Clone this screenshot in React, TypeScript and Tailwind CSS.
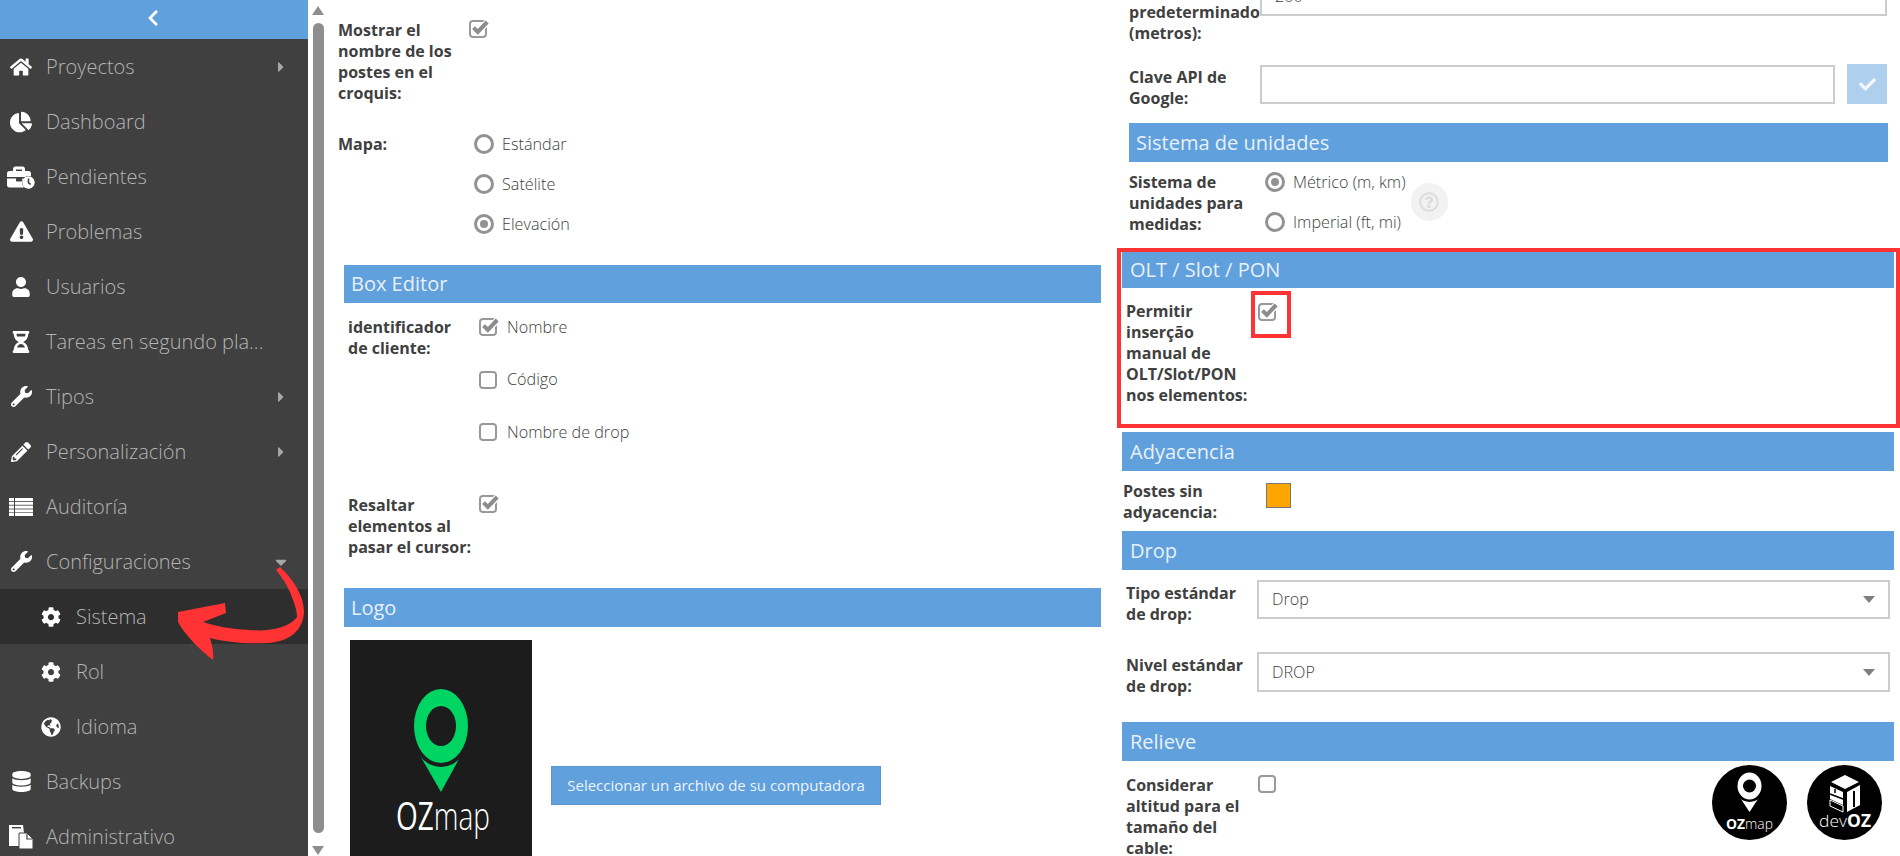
import type { ReactNode } from "react";
import {
  FaChevronLeft,
  FaHome,
  FaChartPie,
  FaBriefcase,
  FaClock,
  FaExclamationTriangle,
  FaUser,
  FaHourglassHalf,
  FaWrench,
  FaPencilAlt,
  FaCog,
  FaGlobeAmericas,
  FaDatabase,
  FaCaretRight,
  FaCaretDown,
  FaCheck,
  FaRegQuestionCircle,
} from "react-icons/fa";

const menuText = "text-[20px] font-light text-[#b4b4b4] whitespace-nowrap";
const optionText = "text-[16.2px] font-light text-[#404040] whitespace-nowrap";

function MenuItem({
  icon,
  label,
  caret,
  sub,
  active,
}: {
  icon: ReactNode;
  label: string;
  caret?: "right" | "down";
  sub?: boolean;
  active?: boolean;
}) {
  return (
    <div className={`h-[55px] flex items-center relative ${active ? "bg-[#2e2e2e]" : ""}`}>
      <div className={`flex justify-center text-white ${sub ? "w-[42px] ml-[30px]" : "w-[42px]"}`}>{icon}</div>
      <span className={`${menuText} ml-[4px]`}>{label}</span>
      {caret === "right" && <FaCaretRight className="absolute left-[273px] top-[20px] text-[#a6a6a6]" size={16} />}
      {caret === "down" && <FaCaretDown className="absolute left-[272px] top-[19px] text-[#a6a6a6]" size={18} />}
    </div>
  );
}

function ListIcon() {
  return (
    <svg width="24" height="18" viewBox="0 0 24 18" fill="#fff" className="block">
      <rect x="0" y="0" width="5" height="3" />
      <rect x="6" y="0" width="18" height="3" />
      <rect x="0" y="3.8" width="5" height="3" />
      <rect x="6" y="3.8" width="18" height="3" />
      <rect x="0" y="7.6" width="5" height="3" />
      <rect x="6" y="7.6" width="18" height="3" />
      <rect x="0" y="11.4" width="5" height="3" />
      <rect x="6" y="11.4" width="18" height="3" />
      <rect x="0" y="15" width="5" height="3" />
      <rect x="6" y="15" width="18" height="3" />
    </svg>
  );
}

function FilesIcon() {
  return (
    <svg width="24" height="24" viewBox="0 0 24 24" className="block">
      <path d="M0 0 H14 L15 8 H10 V21 H0 Z" fill="#fff" />
      <rect x="3" y="2" width="9" height="1.4" fill="#404040" />
      <path d="M10 8 H18 L24 14 V24 H10 Z" fill="#fff" stroke="#404040" strokeWidth="1" />
      <path d="M18 9 V14 H23" fill="none" stroke="#404040" strokeWidth="1.2" />
    </svg>
  );
}

function Sidebar() {
  return (
    <div className="w-[308px] shrink-0 h-full bg-[#404040] overflow-hidden">
      <div className="h-[39px] bg-[#5fa0dd] flex items-center justify-center text-white pb-[3px] pr-[2px]">
        <FaChevronLeft size={18} />
      </div>
      <MenuItem icon={<FaHome size={22} />} label="Proyectos" caret="right" />
      <MenuItem icon={<FaChartPie size={22} />} label="Dashboard" />
      <MenuItem
        icon={
          <span className="relative block w-[28px] h-[24px]">
            <FaBriefcase size={24} />
            <FaClock size={13} className="absolute right-0 bottom-0 bg-[#404040] rounded-full" />
          </span>
        }
        label="Pendientes"
      />
      <MenuItem icon={<FaExclamationTriangle size={23} />} label="Problemas" />
      <MenuItem icon={<FaUser size={20} />} label="Usuarios" />
      <MenuItem icon={<FaHourglassHalf size={22} />} label="Tareas en segundo pla..." />
      <MenuItem icon={<FaWrench size={21} />} label="Tipos" caret="right" />
      <MenuItem icon={<FaPencilAlt size={20} />} label="Personalización" caret="right" />
      <MenuItem icon={<ListIcon />} label="Auditoría" />
      <MenuItem icon={<FaWrench size={21} />} label="Configuraciones" caret="down" />
      <MenuItem icon={<FaCog size={20} />} label="Sistema" sub active />
      <MenuItem icon={<FaCog size={20} />} label="Rol" sub />
      <MenuItem icon={<FaGlobeAmericas size={20} />} label="Idioma" sub />
      <MenuItem icon={<FaDatabase size={21} />} label="Backups" />
      <MenuItem icon={<FilesIcon />} label="Administrativo" />
    </div>
  );
}

function Scrollbar() {
  return (
    <div className="w-[17px] shrink-0 h-full flex flex-col items-center pl-[3px]">
      <div className="mt-[6px] w-0 h-0 border-x-[6px] border-x-transparent border-b-[9px] border-b-[#8e8e8e]" />
      <div className="mt-[8px] w-[11px] h-[810px] rounded-[6px] bg-[#8e8e8e]" />
      <div className="mt-[13px] w-0 h-0 border-x-[6px] border-x-transparent border-t-[9px] border-t-[#8e8e8e]" />
    </div>
  );
}

function SectionHeader({ title, className }: { title: string; className: string }) {
  return (
    <div className={`bg-[#5fa0dd] flex items-center text-[20px] text-[#e9f0f7] ${className}`}>{title}</div>
  );
}

function Label({ children, className }: { children: ReactNode; className: string }) {
  return (
    <div className={`text-[16px] leading-[21px] font-bold text-[#404040] shrink-0 whitespace-nowrap ${className}`}>
      {children}
    </div>
  );
}

function Check({ checked }: { checked?: boolean }) {
  return (
    <svg width="20" height="18" viewBox="0 0 20 18" className="shrink-0 block">
      <rect x="1" y="1" width="16" height="16" rx="3" fill="#fff" stroke="#999" strokeWidth="2" />
      {checked && (
        <>
          <path d="M4.5 7.6 L8.8 11.8 L18.4 2" fill="none" stroke="#fff" strokeWidth="6.5" />
          <path d="M4.5 7.6 L8.8 11.8 L18.2 2" fill="none" stroke="#8c8c8c" strokeWidth="4" />
        </>
      )}
    </svg>
  );
}

function Radio({ checked, label }: { checked?: boolean; label: string }) {
  return (
    <div className="h-[20px] flex items-center">
      <span className="w-[20px] h-[20px] rounded-full border-[3px] border-[#929292] flex items-center justify-center shrink-0">
        {checked && <span className="w-[8px] h-[8px] rounded-full bg-[#929292]" />}
      </span>
      <span className={`ml-[8px] ${optionText}`}>{label}</span>
    </div>
  );
}

function SelectBox({ value, className }: { value: string; className: string }) {
  return (
    <div className={`border-2 border-[#cccccc] flex items-center justify-between pl-[13px] pr-[13px] ${optionText} ${className}`}>
      <span>{value}</span>
      <span className="w-0 h-0 border-x-[6px] border-x-transparent border-t-[7px] border-t-[#808080]" />
    </div>
  );
}

function CheckOption({ checked, label }: { checked?: boolean; label: string }) {
  return (
    <div className="flex items-center h-[18px]">
      <Check checked={checked} />
      <span className={`ml-[8px] ${optionText}`}>{label}</span>
    </div>
  );
}

function LeftColumn() {
  return (
    <div className="w-[785px] shrink-0">
      <div className="flex pl-[13px] pt-[20px]">
        <Label className="w-[131px]">
          Mostrar el
          <br />
          nombre de los
          <br />
          postes en el
          <br />
          croquis:
        </Label>
        <Check checked />
      </div>
      <div className="flex pl-[13px] mt-[30px]">
        <Label className="w-[136px]">Mapa:</Label>
        <div className="flex flex-col gap-[20px]">
          <Radio label="Estándar" />
          <Radio label="Satélite" />
          <Radio checked label="Elevación" />
        </div>
      </div>

      <SectionHeader title="Box Editor" className="ml-[19px] w-[757px] h-[38px] mt-[31px] pl-[7px]" />
      <div className="flex pl-[23px] mt-[14px]">
        <Label className="w-[131px]">
          identificador
          <br />
          de cliente:
        </Label>
        <div className="flex flex-col gap-[34.5px] mt-[1px]">
          <CheckOption checked label="Nombre" />
          <CheckOption label="Código" />
          <CheckOption label="Nombre de drop" />
        </div>
      </div>
      <div className="flex pl-[23px] mt-[54px]">
        <Label className="w-[131px]">
          Resaltar
          <br />
          elementos al
          <br />
          pasar el cursor:
        </Label>
        <Check checked />
      </div>

      <SectionHeader title="Logo" className="ml-[19px] w-[757px] h-[39px] mt-[30px] pl-[7px]" />
      <div className="flex mt-[13px] ml-[25px]">
        <svg width="182" height="230" viewBox="0 0 182 230" className="shrink-0 block">
          <rect width="182" height="230" fill="#1c1c1c" />
          <path d="M68 112 L115 108 L91 152 Z" fill="#00d563" />
          <ellipse cx="91" cy="87" rx="31" ry="40" fill="#1c1c1c" />
          <ellipse cx="91" cy="86" rx="27" ry="37" fill="#00d563" />
          <ellipse cx="91" cy="86" rx="15" ry="20" fill="#1c1c1c" />
          <text x="46" y="190" fontFamily="'Open Sans', sans-serif" fontSize="38" fill="#fff" textLength="94" lengthAdjust="spacingAndGlyphs">
            OZ<tspan fontWeight="300">map</tspan>
          </text>
        </svg>
        <button className="ml-[19px] mt-[126px] w-[330px] h-[39px] bg-[#5fa0dd] border border-[#5b96cf] text-[15px] text-[#eef3f9] shrink-0">
          Seleccionar un archivo de su computadora
        </button>
      </div>
    </div>
  );
}

function RightColumn() {
  return (
    <div className="flex-1 min-w-0">
      <div className="flex pl-[19px] -mt-[23px] h-[39px]">
        <Label className="w-[131px] pt-[25px]">
          predeterminado
          <br />
          (metros):
        </Label>
        <SelectBox value="200" className="w-[627px] h-[39px]" />
      </div>
      <div className="flex pl-[19px] mt-[48px]">
        <Label className="w-[131px] pt-[3px]">
          Clave API de
          <br />
          Google:
        </Label>
        <div className="w-[575px] h-[39px] border-2 border-[#cccccc] mt-[1px]" />
        <div className="w-[40px] h-[40px] ml-[12px] bg-[#aed0ee] flex items-center justify-center text-[#f4f6f8]">
          <FaCheck size={17} />
        </div>
      </div>
      <SectionHeader title="Sistema de unidades" className="ml-[19px] w-[759px] h-[39px] mt-[14px] pl-[7px]" />
      <div className="flex pl-[19px] mt-[10px]">
        <Label className="w-[136px]">
          Sistema de
          <br />
          unidades para
          <br />
          medidas:
        </Label>
        <div className="flex flex-col gap-[20px]">
          <Radio checked label="Métrico (m, km)" />
          <Radio label="Imperial (ft, mi)" />
        </div>
        <div className="w-[37px] h-[38px] rounded-full bg-[#f2f2f2] flex items-center justify-center text-[#dcdcdc] ml-[5px] mt-[11px]">
          <FaRegQuestionCircle size={20} />
        </div>
      </div>

      <div className="ml-[7px] w-[783px] h-[180px] mt-[13px] border-4 border-[#ff3333]">
        <SectionHeader title="OLT / Slot / PON" className="ml-[1px] w-[772px] h-[36px] pl-[8px]" />
        <div className="flex pl-[5px] mt-[3px]">
          <Label className="w-[125px] pt-[10px]">
            Permitir
            <br />
            inserção
            <br />
            manual de
            <br />
            OLT/Slot/PON
            <br />
            nos elementos:
          </Label>
          <div className="w-[40px] h-[47px] border-4 border-[#ff3333] pt-[8px] pl-[3px]">
            <Check checked />
          </div>
        </div>
      </div>

      <SectionHeader title="Adyacencia" className="ml-[12px] w-[772px] h-[39px] mt-[4px] pl-[8px]" />
      <div className="flex pl-[13px] mt-[9px]">
        <Label className="w-[143px] pt-[1px]">
          Postes sin
          <br />
          adyacencia:
        </Label>
        <div className="w-[25px] h-[25px] mt-[3px] bg-[#ffa500] border border-[#777777]" />
      </div>

      <SectionHeader title="Drop" className="ml-[12px] w-[772px] h-[39px] mt-[8px] pl-[8px]" />
      <div className="flex pl-[16px] mt-[10px]">
        <Label className="w-[131px] pt-[3px]">
          Tipo estándar
          <br />
          de drop:
        </Label>
        <SelectBox value="Drop" className="w-[633px] h-[39px]" />
      </div>
      <div className="flex pl-[16px] mt-[27px]">
        <Label className="w-[131px] pt-[3px]">
          Nivel estándar
          <br />
          de drop:
        </Label>
        <SelectBox value="DROP" className="w-[633px] h-[40px]" />
      </div>

      <SectionHeader title="Relieve" className="ml-[12px] w-[772px] h-[39px] mt-[25px] pl-[8px]" />
      <div className="flex pl-[16px] mt-[14px]">
        <Label className="w-[132px]">
          Considerar
          <br />
          altitud para el
          <br />
          tamaño del
          <br />
          cable:
        </Label>
        <Check />
      </div>
    </div>
  );
}

function OzBadge() {
  return (
    <svg width="75" height="75" viewBox="0 0 75 75" className="block">
      <circle cx="37.5" cy="37.5" r="37.5" fill="#000" />
      <path d="M27 31 Q37 38 48 31 L37.5 47 Z" fill="#fff" />
      <circle cx="37.5" cy="22" r="15" fill="#000" />
      <ellipse cx="37.5" cy="21" rx="12" ry="13.5" fill="#fff" />
      <circle cx="37.5" cy="21" r="6.5" fill="#000" />
      <text x="14" y="64" fontFamily="'Open Sans', sans-serif" fontSize="15" fill="#fff" textLength="47" lengthAdjust="spacingAndGlyphs">
        <tspan fontWeight="700">OZ</tspan>
        <tspan fontWeight="300">map</tspan>
      </text>
    </svg>
  );
}

function DevBadge() {
  return (
    <svg width="75" height="75" viewBox="0 0 75 75" className="block">
      <circle cx="37.5" cy="37.5" r="37.5" fill="#000" />
      <path d="M38 10 L52 17 L38 24 L24 17 Z" fill="#fff" />
      <path d="M23 21 L36 27 L36 40 L23 34 Z" fill="#fff" />
      <path d="M28 24 L28 28 M23 29 L36 34" stroke="#000" strokeWidth="1.5" />
      <path d="M23 35 L36 41 L36 47 L23 41 Z" fill="none" stroke="#fff" strokeWidth="1" />
      <path d="M40 27 L53 20 L53 40 L40 47 Z" fill="#fff" />
      <path d="M47 26 L47 42" stroke="#000" strokeWidth="2" />
      <text x="12" y="62" fontFamily="'Open Sans', sans-serif" fontSize="17" fill="#fff" textLength="52" lengthAdjust="spacingAndGlyphs">
        <tspan fontWeight="300">dev</tspan>
        <tspan fontWeight="700">OZ</tspan>
      </text>
    </svg>
  );
}

export default function App() {
  return (
    <div className="relative w-[1900px] h-[856px] overflow-hidden bg-white flex font-['Open_Sans',sans-serif]">
      <Sidebar />
      <Scrollbar />
      <LeftColumn />
      <RightColumn />

      {/* annotation arrow drawn on top of the menu */}
      <svg className="absolute left-0 top-0 pointer-events-none" width="320" height="700" viewBox="0 0 320 700">
        <path
          d="M276 570 C283 578 290 590 293 600 C296 608 297 613 297 617 C290 627 270 632 250 630 C230 629 215 626 203 622 L226 613 L225 603 L178 612 L178 622 C185 635 200 650 213 660 C214 652 212 645 210 638 C225 642 245 644 267 643 C290 642 303 630 304 612 C304 595 292 578 280 567 Z"
          fill="#ff3333"
        />
      </svg>

      {/* floating brand badges */}
      <div className="absolute left-[1712px] top-[765px] flex gap-[20px]">
        <OzBadge />
        <DevBadge />
      </div>
    </div>
  );
}
